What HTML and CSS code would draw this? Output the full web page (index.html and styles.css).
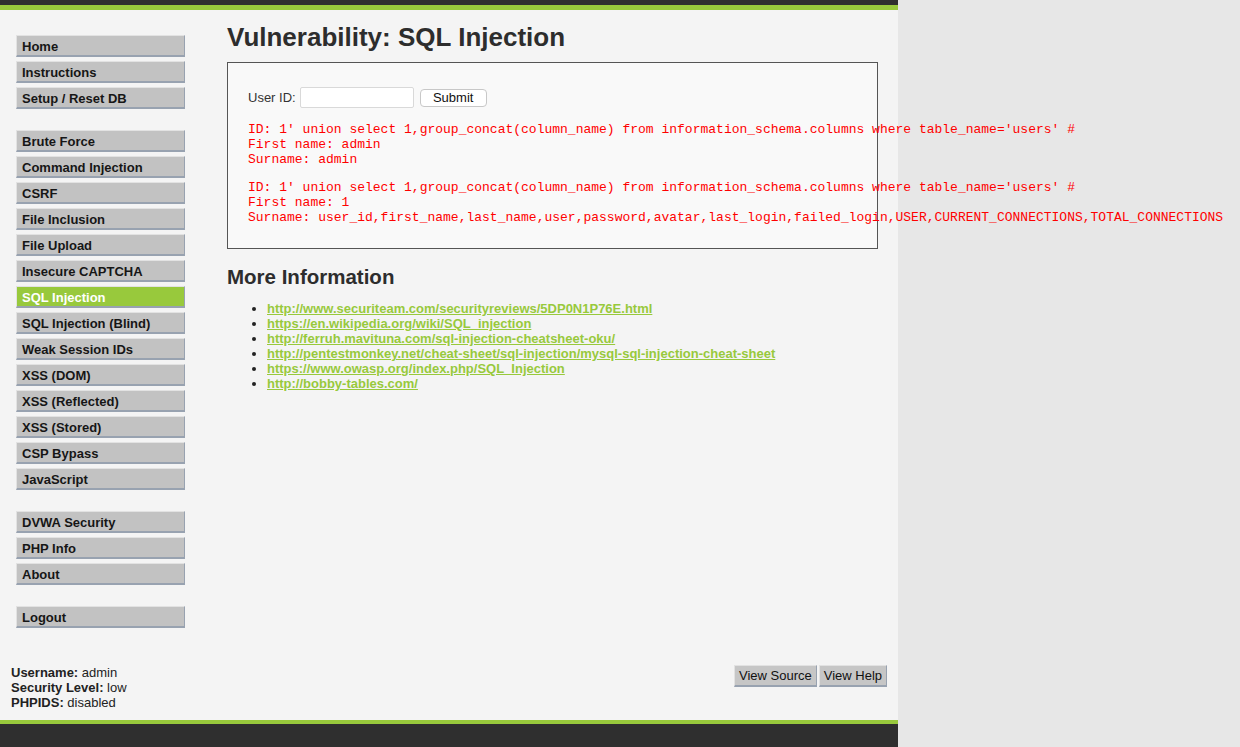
FILE: index.html
```html
<!DOCTYPE html>
<html lang="en">
<head>
<meta charset="utf-8">
<title>Vulnerability: SQL Injection :: Damn Vulnerable Web Application</title>
<link rel="stylesheet" href="styles.css">
</head>
<body>
<div class="container">
  <div class="header"></div>
  <div class="page">
    <nav class="menu">
      <ul class="menu-group">
        <li><a class="menu-item" href="#">Home</a></li>
        <li><a class="menu-item" href="#">Instructions</a></li>
        <li><a class="menu-item" href="#">Setup / Reset DB</a></li>
      </ul>
      <ul class="menu-group">
        <li><a class="menu-item" href="#">Brute Force</a></li>
        <li><a class="menu-item" href="#">Command Injection</a></li>
        <li><a class="menu-item" href="#">CSRF</a></li>
        <li><a class="menu-item" href="#">File Inclusion</a></li>
        <li><a class="menu-item" href="#">File Upload</a></li>
        <li><a class="menu-item" href="#">Insecure CAPTCHA</a></li>
        <li><a class="menu-item selected" href="#">SQL Injection</a></li>
        <li><a class="menu-item" href="#">SQL Injection (Blind)</a></li>
        <li><a class="menu-item" href="#">Weak Session IDs</a></li>
        <li><a class="menu-item" href="#">XSS (DOM)</a></li>
        <li><a class="menu-item" href="#">XSS (Reflected)</a></li>
        <li><a class="menu-item" href="#">XSS (Stored)</a></li>
        <li><a class="menu-item" href="#">CSP Bypass</a></li>
        <li><a class="menu-item" href="#">JavaScript</a></li>
      </ul>
      <ul class="menu-group">
        <li><a class="menu-item" href="#">DVWA Security</a></li>
        <li><a class="menu-item" href="#">PHP Info</a></li>
        <li><a class="menu-item" href="#">About</a></li>
      </ul>
      <ul class="menu-group">
        <li><a class="menu-item" href="#">Logout</a></li>
      </ul>
    </nav>
    <main class="main">
      <h1 class="title">Vulnerability: SQL Injection</h1>
      <div class="vuln-box">
        <form class="form-row">
          <label class="form-label" for="uid">User ID:</label>
          <input class="form-input" id="uid" type="text">
          <button class="form-submit" type="button">Submit</button>
        </form>
        <pre class="result">ID: 1' union select 1,group_concat(column_name) from information_schema.columns where table_name='users' #
First name: admin
Surname: admin</pre>
        <pre class="result">ID: 1' union select 1,group_concat(column_name) from information_schema.columns where table_name='users' #
First name: 1
Surname: user_id,first_name,last_name,user,password,avatar,last_login,failed_login,USER,CURRENT_CONNECTIONS,TOTAL_CONNECTIONS</pre>
      </div>
      <h2 class="subtitle">More Information</h2>
      <ul class="links">
        <li><a href="#">http://www.securiteam.com/securityreviews/5DP0N1P76E.html</a></li>
        <li><a href="#">https://en.wikipedia.org/wiki/SQL_injection</a></li>
        <li><a href="#">http://ferruh.mavituna.com/sql-injection-cheatsheet-oku/</a></li>
        <li><a href="#">http://pentestmonkey.net/cheat-sheet/sql-injection/mysql-sql-injection-cheat-sheet</a></li>
        <li><a href="#">https://www.owasp.org/index.php/SQL_Injection</a></li>
        <li><a href="#">http://bobby-tables.com/</a></li>
      </ul>
    </main>
  </div>
  <div class="info-row">
    <div class="user-info">
      <div><b>Username:</b> admin</div>
      <div><b>Security Level:</b> low</div>
      <div><b>PHPIDS:</b> disabled</div>
    </div>
    <div class="popup-buttons">
      <button class="popup-button" type="button">View Source</button>
      <button class="popup-button" type="button">View Help</button>
    </div>
  </div>
  <div class="footer"></div>
</div>
</body>
</html>
```

FILE: styles.css
```css
html, body {
  margin: 0;
  padding: 0;
}

body {
  background: #e7e7e7;
  font-family: "Liberation Sans", Arial, sans-serif;
  font-size: 13px;
  color: #222;
}

.container {
  width: 898px;
  min-height: 747px;
  background: #f4f4f4;
  display: flex;
  flex-direction: column;
}

.header {
  height: 5px;
  background: #2f2f2f;
  border-bottom: 5px solid #98c93c;
}

.page {
  flex: 1;
  display: flex;
  align-items: flex-start;
}

.menu {
  margin: 25px 0 0 16px;
  width: 169px;
  flex: none;
}

.menu-group {
  list-style: none;
  margin: 0 0 21px;
  padding: 0;
  display: flex;
  flex-direction: column;
  gap: 4px;
}

.menu-item {
  display: block;
  box-sizing: border-box;
  height: 22px;
  line-height: 19px;
  padding: 1px 0 0 5px;
  background: #c2c2c2;
  border-top: 1px solid #e2e2e2;
  border-left: 1px solid #e2e2e2;
  border-right: 1px solid #98a2b0;
  border-bottom: 2px solid #98a2b0;
  color: #161616;
  font-weight: bold;
  font-size: 13px;
  text-decoration: none;
}

.menu-item.selected {
  background: #98c93c;
  color: #fff;
}

.main {
  margin: 12px 0 0 42px;
  flex: 1;
}

.title {
  margin: 0 0 10px;
  font-size: 26px;
  line-height: 30px;
  font-weight: bold;
  color: #2d2d2d;
}

.vuln-box {
  box-sizing: border-box;
  width: 651px;
  padding: 24px 20px 23px 20px;
  background: #f9f9f9;
  border: 1px solid #555;
}

.form-row {
  display: flex;
  align-items: center;
  height: 21px;
  margin: 0;
}

.form-label {
  color: #333;
  font-size: 13px;
  margin-right: 4px;
}

.form-input {
  box-sizing: border-box;
  width: 114px;
  height: 21px;
  margin: 0 6px 0 0;
  border: 1px solid #d9d9d9;
  border-radius: 2px;
  background: #fff;
  padding: 0 4px;
}

.form-submit {
  box-sizing: border-box;
  width: 67px;
  height: 18px;
  margin: 0;
  padding: 0;
  background: #fff;
  border: 1px solid #c8c8c8;
  border-radius: 4px;
  font-family: "Liberation Sans", Arial, sans-serif;
  font-size: 13px;
  color: #111;
}

.result {
  margin: 14px 0 0;
  font-family: "Liberation Mono", "Courier New", monospace;
  font-size: 13px;
  line-height: 15px;
  color: #ff0000;
  white-space: pre;
  overflow: visible;
}

.result + .result {
  margin-top: 13px;
}

.subtitle {
  margin: 16px 0 13px;
  font-size: 20.5px;
  line-height: 23px;
  font-weight: bold;
  color: #2d2d2d;
}

.links {
  margin: 0;
  padding-left: 40px;
  line-height: 15px;
}

.links a {
  color: #98c93c;
  font-weight: bold;
  font-size: 13px;
}

.info-row {
  display: flex;
  justify-content: space-between;
  align-items: flex-start;
  padding: 0 11px 10px 11px;
}

.user-info {
  line-height: 15px;
  font-size: 13px;
  color: #222;
}

.popup-buttons {
  display: flex;
  gap: 2px;
}

.popup-button {
  box-sizing: border-box;
  height: 22px;
  margin: 0;
  padding: 0 4px;
  background: #c6c6c6;
  border-top: 1px solid #e2e2e2;
  border-left: 1px solid #e2e2e2;
  border-right: 1px solid #98a2b0;
  border-bottom: 2px solid #98a2b0;
  font-family: "Liberation Sans", Arial, sans-serif;
  font-size: 13px;
  color: #111;
}

.footer {
  height: 23px;
  background: #2f2f2f;
  border-top: 4px solid #98c93c;
}
```
